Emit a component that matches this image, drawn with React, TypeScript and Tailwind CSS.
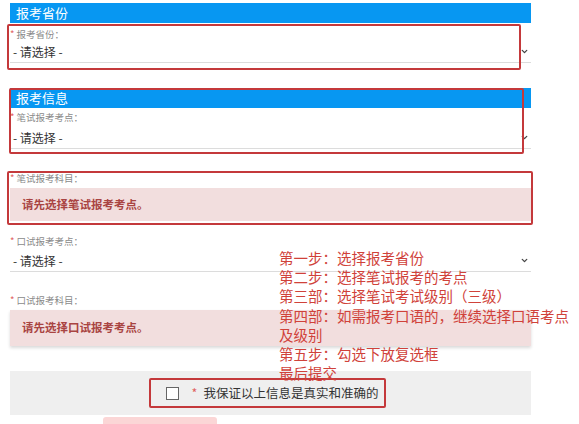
import React from 'react';
import { ChevronDown } from 'lucide-react';

const FONT = '"Noto Sans CJK SC", "Liberation Sans", sans-serif';

const STEPS = [
  '第一步：选择报考省份',
  '第二步：选择笔试报考的考点',
  '第三部：选择笔试考试级别（三级）',
  '第四部：如需报考口语的，继续选择口语考点',
  '及级别',
  '第五步：勾选下放复选框',
  '最后提交',
];

function SectionBar({ title }: { title: string }) {
  return (
    <div className="h-[20px] bg-[#0797f2] pl-[6px] text-[13px] leading-[20px] text-white">{title}</div>
  );
}

function FieldLabel({ text }: { text: string }) {
  return (
    <div className="flex h-[14px] items-center text-[9.5px] text-[#8a8a8a]">
      <span className="mr-[2px] text-[#e06060]">*</span>
      {text}
    </div>
  );
}

function SelectRow() {
  return (
    <div className="flex h-[22px] items-center justify-between border-b border-[#dcdcdc] pl-[3px] pr-[2px] text-[12px] text-[#333]">
      <span>- 请选择 -</span>
      <ChevronDown size={9} strokeWidth={3.5} className="text-[#444]" />
    </div>
  );
}

function Notice({ text, shadow }: { text: string; shadow?: boolean }) {
  return (
    <div className={`flex h-full items-center bg-[#f2dede] pl-[12px] text-[11.5px] font-bold text-[#a94442] ${shadow ? 'shadow-[0_2px_3px_rgba(0,0,0,0.15)]' : ''}`}>
      {text}
    </div>
  );
}

export default function App() {
  return (
    <div className="relative h-[424px] w-[579px] overflow-hidden bg-white" style={{ fontFamily: FONT }}>
      <div className="ml-[10px] w-[521px] pt-[3px]">
        <SectionBar title="报考省份" />
        <div className="pt-[4px]">
          <FieldLabel text="报考省份：" />
          <SelectRow />
        </div>

        <div className="mt-[25px]">
          <SectionBar title="报考信息" />
        </div>
        <div className="pt-[2px]">
          <FieldLabel text="笔试报考考点：" />
          <div className="mt-[3px]">
            <SelectRow />
          </div>
        </div>

        <div className="mt-[22px]">
          <FieldLabel text="笔试报考科目：" />
          <div className="mt-[3px] h-[33px]">
            <Notice text="请先选择笔试报考考点。" />
          </div>
        </div>

        <div className="mt-[13px]">
          <FieldLabel text="口试报考考点：" />
          <div className="mt-[2px]">
            <SelectRow />
          </div>
        </div>

        <div className="mt-[21px]">
          <FieldLabel text="口试报考科目：" />
          <div className="mt-[3px] h-[36px]">
            <Notice text="请先选择口试报考考点。" shadow />
          </div>
        </div>

        <div className="mt-[25px] flex h-[44px] items-center justify-center bg-[#efefef]">
          <div className="flex items-center gap-[13px] pl-[3px]">
            <span className="h-[13px] w-[13px] border border-[#666] bg-white" />
            <span className="flex items-center text-[12.5px] text-[#333]">
              <span className="mr-[6px] text-[#e06060]">*</span>
              我保证以上信息是真实和准确的
            </span>
          </div>
        </div>

        <div className="ml-[93px] mt-[2px] h-[8px] w-[114px] rounded-t-[3px] bg-[#fbd6d6]" />
      </div>

      {/* annotation overlays */}
      <div className="absolute left-[7px] top-[24px] h-[46px] w-[514px] rounded-[2px] border-2 border-[#c4393b]" />
      <div className="absolute left-[9px] top-[88px] h-[66px] w-[515px] rounded-[2px] border-2 border-[#c4393b]" />
      <div className="absolute left-[7px] top-[171px] h-[54px] w-[526px] rounded-[2px] border-2 border-[#c4393b]" />
      <div className="absolute left-[149px] top-[378px] h-[30px] w-[237px] rounded-[2px] border-2 border-[#c4393b]" />

      <div className="absolute left-[279px] top-[248px] text-[14.5px] leading-[19.2px] text-[#d0423a]">
        {STEPS.map((s) => (
          <div key={s} className="whitespace-nowrap">{s}</div>
        ))}
      </div>
    </div>
  );
}
